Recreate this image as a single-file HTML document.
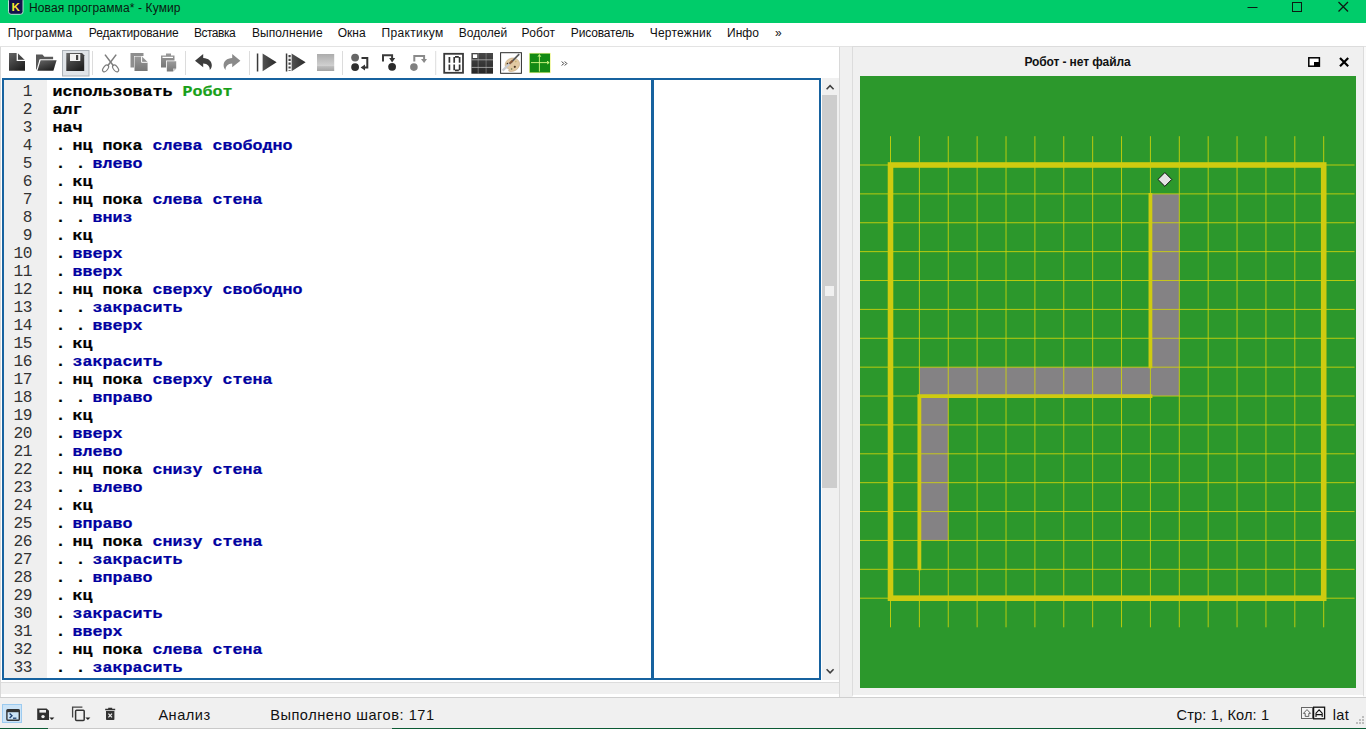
<!DOCTYPE html>
<html lang="ru"><head><meta charset="utf-8"><title>Новая программа* - Кумир</title>
<style>
html,body{margin:0;padding:0}
body{width:1366px;height:729px;overflow:hidden;position:relative;background:#f0f0f0;font-family:"Liberation Sans",sans-serif;color:#000}
div,span,svg{position:absolute;box-sizing:border-box}
.t{white-space:nowrap;line-height:1;transform-origin:0 0}
#title{left:0;top:0;width:1366px;height:23px;background:#00cc6a}
#menu{left:0;top:23px;width:1366px;height:24px;background:#fff}
#menu .t{font-size:12px;top:3.5px;color:#111}
#lf{left:0;top:47px;width:840px;height:650px;background:#fff;border:1px solid #d9d9d9;border-top:none;border-bottom:none}
#ed{left:2px;top:78px;width:819px;height:602px;border:2px solid #17629f;background:#fff}
#gut{left:0;top:0;width:43px;height:598px;background:#efefef}
.ln{left:0;width:27.9px;text-align:right;font:16.2px "Liberation Mono",monospace;letter-spacing:-0.55px;color:#333;line-height:18px;height:18px}
.cl{left:48.6px;white-space:pre;font:bold 16.67px "Liberation Mono",monospace;line-height:18px;height:18px;color:#000;transform:scaleY(0.9);transform-origin:0 13.4px;-webkit-text-stroke:0.25px}
.cl u{text-decoration:none;position:relative;left:3px}
.cl b{color:#0000a0;font-weight:bold}
.cl i{color:#18a018;font-style:normal;font-weight:bold}
#rp{left:852px;top:46px;width:512px;height:651px;background:#f0f0f0;border:1px solid #dcdcdc;border-bottom:2px solid #fff}
#sb{left:0;top:697px;width:1366px;height:32px;background:#f0f0f0}
#sb .t{font-size:14.6px;color:#111}
</style></head><body>
<div id="title">
<svg style="left:8px;top:0" width="16" height="15" viewBox="0 0 16 15"><rect x="0.5" y="-2" width="14.5" height="16.3" rx="2.6" fill="#12124a" stroke="#c8f0e0" stroke-width="0.9"/><text x="7.7" y="11.2" text-anchor="middle" font-family="Liberation Sans, sans-serif" font-weight="bold" font-size="11.5" fill="#ffe92e">K</text></svg>
<span class="t" id="ttl" style="left:29px;top:2.4px;font-size:12px;letter-spacing:0.125px;color:#0a1a10">Новая программа* - Кумир</span>
<svg style="left:1240px;top:0" width="126" height="23" viewBox="0 0 126 23" fill="none" stroke="#0c1a12" stroke-width="1"><path d="M7.5 7.5H17.5"/><rect x="52.5" y="2.5" width="9" height="9"/><path d="M98.5 2 L108 11.5 M108 2 L98.5 11.5" stroke-width="1.25"/></svg>
</div>
<div id="menu">
<span class="t" id="m0" style="left:7.8px;letter-spacing:0.19px">Программа</span>
<span class="t" id="m1" style="left:88.8px;letter-spacing:-0.12px">Редактирование</span>
<span class="t" id="m2" style="left:194px;letter-spacing:-0.5px">Вставка</span>
<span class="t" id="m3" style="left:252px;letter-spacing:0.08px">Выполнение</span>
<span class="t" id="m4" style="left:337.7px;letter-spacing:0px">Окна</span>
<span class="t" id="m5" style="left:381.6px;letter-spacing:0.33px">Практикум</span>
<span class="t" id="m6" style="left:458.8px;letter-spacing:0.02px">Водолей</span>
<span class="t" id="m7" style="left:521.6px;letter-spacing:0.1px">Робот</span>
<span class="t" id="m8" style="left:570.8px;letter-spacing:-0.17px">Рисователь</span>
<span class="t" id="m9" style="left:649.7px;letter-spacing:0.24px">Чертежник</span>
<span class="t" id="m10" style="left:727px;letter-spacing:0.05px">Инфо</span>
<span class="t" id="m11" style="left:775px;letter-spacing:0px">»</span>
<div style="left:0;top:23px;width:1366px;height:1px;background:#e3e3e3"></div>
</div>
<div id="lf"></div>
<div style="left:1px;top:682px;width:838px;height:1px;background:#dcdcdc"></div><div style="left:1px;top:683px;width:838px;height:11px;background:#f0f0f0"></div>
<div id="ed">
<div id="gut"></div>
<div class="ln" style="top:2.5px">1</div><div class="cl" style="top:2.6px">использовать <i>Робот</i></div>
<div class="ln" style="top:20.5px">2</div><div class="cl" style="top:20.6px">алг</div>
<div class="ln" style="top:38.5px">3</div><div class="cl" style="top:38.6px">нач</div>
<div class="ln" style="top:56.5px">4</div><div class="cl" style="top:56.6px"><u>.</u> нц пока <b>слева</b> <b>свободно</b></div>
<div class="ln" style="top:74.5px">5</div><div class="cl" style="top:74.6px"><u>.</u> <u>.</u> <b>влево</b></div>
<div class="ln" style="top:92.5px">6</div><div class="cl" style="top:92.6px"><u>.</u> кц</div>
<div class="ln" style="top:110.5px">7</div><div class="cl" style="top:110.6px"><u>.</u> нц пока <b>слева</b> <b>стена</b></div>
<div class="ln" style="top:128.5px">8</div><div class="cl" style="top:128.6px"><u>.</u> <u>.</u> <b>вниз</b></div>
<div class="ln" style="top:146.5px">9</div><div class="cl" style="top:146.6px"><u>.</u> кц</div>
<div class="ln" style="top:164.5px">10</div><div class="cl" style="top:164.6px"><u>.</u> <b>вверх</b></div>
<div class="ln" style="top:182.5px">11</div><div class="cl" style="top:182.6px"><u>.</u> <b>вверх</b></div>
<div class="ln" style="top:200.5px">12</div><div class="cl" style="top:200.6px"><u>.</u> нц пока <b>сверху</b> <b>свободно</b></div>
<div class="ln" style="top:218.5px">13</div><div class="cl" style="top:218.6px"><u>.</u> <u>.</u> <b>закрасить</b></div>
<div class="ln" style="top:236.5px">14</div><div class="cl" style="top:236.6px"><u>.</u> <u>.</u> <b>вверх</b></div>
<div class="ln" style="top:254.5px">15</div><div class="cl" style="top:254.6px"><u>.</u> кц</div>
<div class="ln" style="top:272.5px">16</div><div class="cl" style="top:272.6px"><u>.</u> <b>закрасить</b></div>
<div class="ln" style="top:290.5px">17</div><div class="cl" style="top:290.6px"><u>.</u> нц пока <b>сверху</b> <b>стена</b></div>
<div class="ln" style="top:308.5px">18</div><div class="cl" style="top:308.6px"><u>.</u> <u>.</u> <b>вправо</b></div>
<div class="ln" style="top:326.5px">19</div><div class="cl" style="top:326.6px"><u>.</u> кц</div>
<div class="ln" style="top:344.5px">20</div><div class="cl" style="top:344.6px"><u>.</u> <b>вверх</b></div>
<div class="ln" style="top:362.5px">21</div><div class="cl" style="top:362.6px"><u>.</u> <b>влево</b></div>
<div class="ln" style="top:380.5px">22</div><div class="cl" style="top:380.6px"><u>.</u> нц пока <b>снизу</b> <b>стена</b></div>
<div class="ln" style="top:398.5px">23</div><div class="cl" style="top:398.6px"><u>.</u> <u>.</u> <b>влево</b></div>
<div class="ln" style="top:416.5px">24</div><div class="cl" style="top:416.6px"><u>.</u> кц</div>
<div class="ln" style="top:434.5px">25</div><div class="cl" style="top:434.6px"><u>.</u> <b>вправо</b></div>
<div class="ln" style="top:452.5px">26</div><div class="cl" style="top:452.6px"><u>.</u> нц пока <b>снизу</b> <b>стена</b></div>
<div class="ln" style="top:470.5px">27</div><div class="cl" style="top:470.6px"><u>.</u> <u>.</u> <b>закрасить</b></div>
<div class="ln" style="top:488.5px">28</div><div class="cl" style="top:488.6px"><u>.</u> <u>.</u> <b>вправо</b></div>
<div class="ln" style="top:506.5px">29</div><div class="cl" style="top:506.6px"><u>.</u> кц</div>
<div class="ln" style="top:524.5px">30</div><div class="cl" style="top:524.6px"><u>.</u> <b>закрасить</b></div>
<div class="ln" style="top:542.5px">31</div><div class="cl" style="top:542.6px"><u>.</u> <b>вверх</b></div>
<div class="ln" style="top:560.5px">32</div><div class="cl" style="top:560.6px"><u>.</u> нц пока <b>слева</b> <b>стена</b></div>
<div class="ln" style="top:578.5px">33</div><div class="cl" style="top:578.6px"><u>.</u> <u>.</u> <b>закрасить</b></div>
<div style="left:647.2px;top:0;width:2.6px;height:598px;background:#17629f"></div>
</div>
<div style="left:822px;top:78px;width:17px;height:602px;background:#f0f0f0"></div>
<div style="left:822px;top:95px;width:15px;height:393px;background:#cdcdcd"></div>
<div style="left:825px;top:286px;width:9px;height:10px;background:#f0f0f0"></div>
<svg style="left:822px;top:78px" width="17" height="602" viewBox="0 0 17 602" fill="none" stroke="#404040" stroke-width="1.6"><path d="M4.6 11.2L8.1 7.6L11.6 11.2"/><path d="M4.6 591.2L8.1 594.8L11.6 591.2"/></svg>
<svg id="tb" style="left:0;top:47px" width="600" height="31" viewBox="0 47 600 31">
<defs>
<linearGradient id="gd" x1="0" y1="0" x2="0.6" y2="1"><stop offset="0" stop-color="#666"/><stop offset="1" stop-color="#222"/></linearGradient>
<linearGradient id="gh" x1="0" y1="0" x2="1" y2="0"><stop offset="0" stop-color="#525252"/><stop offset="1" stop-color="#2a2a2a"/></linearGradient>
<linearGradient id="gg" x1="0" y1="0" x2="0" y2="1"><stop offset="0" stop-color="#9a9a9a"/><stop offset="1" stop-color="#777"/></linearGradient>
<linearGradient id="gs" x1="0" y1="0" x2="0" y2="1"><stop offset="0" stop-color="#acacac"/><stop offset="0.68" stop-color="#d0d0d0"/><stop offset="0.74" stop-color="#bcbcbc"/><stop offset="1" stop-color="#a4a4a4"/></linearGradient>
</defs>
<rect x="92.0" y="51" width="1" height="24" fill="#dcdcdc"/>
<rect x="185.0" y="51" width="1" height="24" fill="#dcdcdc"/>
<rect x="249.0" y="51" width="1" height="24" fill="#dcdcdc"/>
<rect x="342.0" y="51" width="1" height="24" fill="#dcdcdc"/>
<rect x="435.2" y="51" width="1" height="24" fill="#dcdcdc"/>
<path d="M9 53H17.6L25 60.2V70.8H9Z" fill="url(#gd)"/><path d="M17.3 52.5V60.3H25.5" fill="none" stroke="#fff" stroke-width="1.3"/>
<path d="M36 54.4H42.4L44.4 56.8H53.1V60H39.6L38.6 69.5H36Z" fill="#585858"/><path d="M39.6 59.3H57.6L54 70.9H36.2Z" fill="#fff"/><path d="M40.6 60.3H56.6L53.4 70.8H37.4Z" fill="url(#gd)"/>
<rect x="62.5" y="50.5" width="26.5" height="25.5" fill="#e0e4e8" stroke="#adb3b9"/>
<path d="M66.3 53H82L84.2 55.2V71H66.3Z" fill="url(#gd)"/><rect x="70" y="54" width="10.3" height="7" fill="#f2f2f2"/><rect x="76" y="55" width="2.2" height="5" fill="#444"/>
<g fill="none" stroke="#7d7d7d" stroke-width="1.2"><path d="M105 54.6L113.6 66" stroke-width="1.5"/><path d="M116.2 54.6L107.6 66" stroke-width="1.5"/><ellipse cx="115.6" cy="68.4" rx="2.2" ry="3.9" transform="rotate(-38 115.6 68.4)"/><ellipse cx="105.6" cy="68.4" rx="2.2" ry="3.9" transform="rotate(38 105.6 68.4)"/></g>
<path d="M130.5 53H143.5V56H134V67.5H130.5Z" fill="#8e8e8e"/><path d="M134.5 56.5H142L147.6 62V71H134.5Z" fill="url(#gg)"/><path d="M141.6 56.3V62.3H147.8" fill="none" stroke="#fff" stroke-width="1"/>
<path d="M161 55.5H166V53.5H171V55.5H174.5V60.5H166V67.5H161Z" fill="url(#gg)"/><rect x="162.5" y="56.8" width="10.5" height="1.2" fill="#fff"/><path d="M166.8 61.3H176.2V68.5L173 71.6H166.8Z" fill="url(#gg)"/><path d="M176.2 68.5H173V71.6" fill="#ccc"/>
<path d="M195 61.2L203.2 54.6V58.4C208.5 58.6 211.8 61.8 211.8 65.8C211.8 67.8 211 69.4 209.8 70.6C210 67 207.6 64.2 203.2 64V67.8Z" fill="#3d3d3d" transform="translate(0 -0.5)"/>
<g transform="translate(435.4 -0.5) scale(-1 1)"><path d="M195 61.2L203.2 54.6V58.4C208.5 58.6 211.8 61.8 211.8 65.8C211.8 67.8 211 69.4 209.8 70.6C210 67 207.6 64.2 203.2 64V67.8Z" fill="#8a8a8a"/></g>
<rect x="256.8" y="53.5" width="1.5" height="18" fill="#3a3a3a"/><path d="M262.6 53.5L276.6 62.3L262.6 71.2Z" fill="url(#gh)"/>
<rect x="285.8" y="53.5" width="1.5" height="18" fill="#3a3a3a"/><path d="M289.6 55v16" stroke="#444" stroke-width="2.2" stroke-dasharray="2.2 1.6" fill="none"/><path d="M291.6 53.5L305.6 62.3L291.6 71.2Z" fill="url(#gh)"/>
<rect x="317" y="54" width="17.2" height="17" fill="url(#gs)"/>
<circle cx="355.1" cy="57.6" r="3.9" fill="#666"/><circle cx="355.1" cy="67.1" r="3.9" fill="#2e2e2e"/><path d="M361.5 57.9H367.3V67.6H364" fill="none" stroke="#333" stroke-width="2"/><path d="M360.6 67.6L365 64.6V70.6Z" fill="#333"/>
<path d="M383 61.6V55.2H392.1V58.4" fill="none" stroke="#3a3a3a" stroke-width="2"/><path d="M389.2 57.9H395.2L392.1 62.4Z" fill="#333"/><circle cx="392.1" cy="66.8" r="3.9" fill="#2a2a2a"/>
<circle cx="413.9" cy="67.1" r="3.8" fill="#808080"/><path d="M414.3 61.4V56H424.1V59.4" fill="none" stroke="#8a8a8a" stroke-width="2"/><path d="M421 58.9H427L424.1 63Z" fill="#8a8a8a"/>
<rect x="444.2" y="53.8" width="18.8" height="19" fill="#fff" stroke="#3a3a3a" stroke-width="1.8"/><g stroke="#333" stroke-width="1.7" fill="none"><path d="M449.4 57V62.8M449.4 64.4V70.2"/><path d="M454.2 57V62.8M454.2 64.4V70.2M459.6 57V62.8M459.6 64.4V70.2M455 56.9H458.8M455 70.3H458.8"/></g>
<defs><linearGradient id="gk" x1="0" y1="0" x2="0" y2="1"><stop offset="0" stop-color="#484848"/><stop offset="1" stop-color="#262626"/></linearGradient></defs><rect x="471.4" y="53" width="21.6" height="20.7" fill="url(#gk)"/><path d="M478.2 53V73.7M486.1 53V73.7" stroke="#858585" stroke-width="0.7" fill="none"/><path d="M471.4 59.8H493M471.4 67.4H493" stroke="#b4b4b4" stroke-width="0.8" fill="none"/><rect x="472.9" y="54.3" width="4.3" height="3.7" fill="#fff"/>
<rect x="500.6" y="52.7" width="20.8" height="20.6" fill="#fff" stroke="#2a2a2a" stroke-width="1"/><path d="M505.2 64.6C505.4 60 510.5 57.2 514.8 58.2C519.4 59.4 520.6 63.8 518.6 67.4C516.6 70.8 511.6 72.4 508.6 71C509.6 69.4 508.8 68.2 507.2 68.2C505.6 68 505 66.4 505.2 64.6Z" fill="#e2c9a2" stroke="#b89a70" stroke-width="0.5"/><circle cx="507.6" cy="63.8" r="1" fill="#3a2a1a"/><circle cx="514.8" cy="66.8" r="1.1" fill="#4a3520"/><circle cx="511.6" cy="69" r="0.8" fill="#6a7a50"/><circle cx="515.8" cy="61.6" r="0.8" fill="#c8b070"/><path d="M519.2 54.2L510.6 62.8" stroke="#585858" stroke-width="1.7"/><path d="M510.8 62.4L502.6 70.6" stroke="#c9ccd0" stroke-width="2.2"/><path d="M512.6 60.6L509.4 63.8" stroke="#8a5a3a" stroke-width="2"/>
<rect x="529.1" y="52.9" width="21.6" height="20.2" fill="#eef58c"/><rect x="529.8" y="53.6" width="20.2" height="18.8" fill="#138a13"/><g stroke="#d6fb86" stroke-width="0.9" fill="none"><path d="M539.4 54.8V71.6M531 62.6H549"/><path d="M538 56.8L539.4 54.6L540.8 56.8M547 61.2L549.2 62.6L547 64"/></g>
<path d="M561.8 61.5L563.8 63.5L561.8 65.5M564.8 61.5L566.8 63.5L564.8 65.5" fill="none" stroke="#333" stroke-width="1"/>
</svg>
<div id="rp"></div><div style="left:1364px;top:47px;width:2px;height:650px;background:#fafafa"></div>
<span class="t" id="rpt" style="left:1024.4px;top:56px;font-size:12px;letter-spacing:-0.1px;font-weight:bold;color:#111">Робот - нет файла</span>
<svg style="left:1300px;top:52px" width="56" height="20" viewBox="1300 52 56 20"><rect x="1308.8" y="57.8" width="10.6" height="8.4" fill="#fff" stroke="#000" stroke-width="1.5"/><rect x="1314" y="62" width="5.4" height="4.2" fill="#000"/><path d="M1340 58L1348.2 66.2M1348.2 58L1340 66.2" stroke="#000" stroke-width="2.2" fill="none"/></svg>
<svg id="cv" style="left:860px;top:76px" width="496" height="612" viewBox="860 76 496 612">
<rect x="860" y="76" width="496" height="612" fill="#2c982c"/>
<rect x="1150.42" y="193.88" width="28.88" height="202.16" fill="#848284"/><rect x="919.38" y="367.16" width="231.04" height="28.88" fill="#848284"/><rect x="919.38" y="396.04" width="28.88" height="144.40" fill="#848284"/>
<path d="M860 165.0H1354.5M860 193.88H1354.5M860 222.76H1354.5M860 251.64H1354.5M860 280.52H1354.5M860 309.4H1354.5M860 338.28H1354.5M860 367.16H1354.5M860 396.04H1354.5M860 424.92H1354.5M860 453.8H1354.5M860 482.68H1354.5M860 511.56H1354.5M860 540.44H1354.5M860 569.32H1354.5M860 598.2H1354.5M890.5 136.2V627.3M919.38 136.2V627.3M948.26 136.2V627.3M977.14 136.2V627.3M1006.02 136.2V627.3M1034.9 136.2V627.3M1063.78 136.2V627.3M1092.66 136.2V627.3M1121.54 136.2V627.3M1150.42 136.2V627.3M1179.3 136.2V627.3M1208.18 136.2V627.3M1237.06 136.2V627.3M1265.94 136.2V627.3M1294.82 136.2V627.3M1323.7 136.2V627.3" fill="none" stroke="#d2d40a" stroke-width="1" opacity="0.85"/>
<rect x="890.5" y="165.0" width="433.20" height="433.20" fill="none" stroke="#cecb10" stroke-width="5.6"/>
<path d="M1150.42 192.88V368.16M917.38 396.04H1152.42M919.38 396.04V570.32" fill="none" stroke="#cecb10" stroke-width="3.8"/>
<path d="M1164.86 172.54L1171.76 179.44L1164.86 186.34L1157.96 179.44Z" fill="#e4e4e4" stroke="#111" stroke-width="1"/>
</svg>
<div id="sb">
<div style="left:0;top:0;width:1366px;height:1px;background:#cfcfcf"></div>
<div style="left:2px;top:7px;width:20px;height:19px;background:#cce4f7;border:1px solid #9ccbf0"></div>
<svg style="left:0;top:0" width="130" height="32" viewBox="0 697 130 32">
<rect x="6.9" y="709.6" width="12.4" height="10.6" rx="1" fill="none" stroke="#333" stroke-width="1.4"/><rect x="6.9" y="709.6" width="12.4" height="2.6" fill="#333"/>
<path d="M9.6 713.6L12 715.8L9.6 718" fill="none" stroke="#1d3f6e" stroke-width="1.3"/><path d="M13 718.2H16.4" stroke="#1d3f6e" stroke-width="1.3"/>
<path d="M37.2 708.4H46.6L49 710.8V720H37.2Z" fill="#303030"/><rect x="39.4" y="710" width="6.6" height="2.6" fill="#f0f0f0"/><circle cx="43" cy="716.6" r="1.7" fill="#f0f0f0"/><path d="M49.4 717.4H54.4L51.9 720Z" fill="#222"/>
<path d="M72.6 717.6V707.2H82.4" fill="none" stroke="#444" stroke-width="1.3"/><rect x="75.6" y="710.2" width="8.6" height="10.4" rx="1" fill="none" stroke="#333" stroke-width="1.5"/><path d="M85.4 717.4H90.4L87.9 720Z" fill="#222"/>
<path d="M105.2 709.6H115.2M108.2 708.6H112.2" stroke="#333" stroke-width="1.5"/><path d="M106 711H114.4V719.2Q114.4 720 113.6 720H106.8Q106 720 106 719.2Z" fill="#333"/><path d="M108.4 713.6L112 717.4M112 713.6L108.4 717.4" stroke="#f0f0f0" stroke-width="1.2"/>
</svg>
<span class="t" id="s0" style="left:158.4px;top:10.5px;letter-spacing:0.5px">Анализ</span>
<span class="t" id="s1" style="left:270.2px;top:10.5px;letter-spacing:0.52px">Выполнено шагов: 171</span>
<span class="t" id="s2" style="left:1176.6px;top:10.5px;letter-spacing:0.14px">Стр: 1, Кол: 1</span>
<span class="t" id="s3" style="left:1332.7px;top:10.5px;letter-spacing:0.4px">lat</span>
<svg style="left:1296px;top:5px" width="34" height="22" viewBox="1296 702 34 22"><rect x="1301.5" y="707.5" width="11" height="11" fill="#f4f4f4" stroke="#666" stroke-width="1"/><path d="M1307 709.6L1310.6 713.4H1308.8V716.4H1305.2V713.4H1303.4Z" fill="none" stroke="#555" stroke-width="0.9"/><rect x="1313.6" y="707.2" width="11" height="11.6" fill="#f4f4f4" stroke="#111" stroke-width="1.3"/><path d="M1316 717V713.2L1319.1 709.8L1322.2 713.2V717M1316 714.6H1322.2" fill="none" stroke="#111" stroke-width="1.1"/></svg>
<svg style="left:1353px;top:18px" width="14" height="13" viewBox="0 0 14 13" fill="#bdbdbd"><rect x="9" y="1" width="2" height="2"/><rect x="6" y="4" width="2" height="2"/><rect x="9" y="4" width="2" height="2"/><rect x="3" y="7" width="2" height="2"/><rect x="6" y="7" width="2" height="2"/><rect x="9" y="7" width="2" height="2"/></svg>
<div style="left:0;top:31px;width:48px;height:1px;background:#0b5a33"></div><div style="left:48px;top:31px;width:344px;height:1px;background:#c9c9c9"></div><div style="left:392px;top:31px;width:974px;height:1px;background:#0b5a33"></div>
</div>
</body></html>
